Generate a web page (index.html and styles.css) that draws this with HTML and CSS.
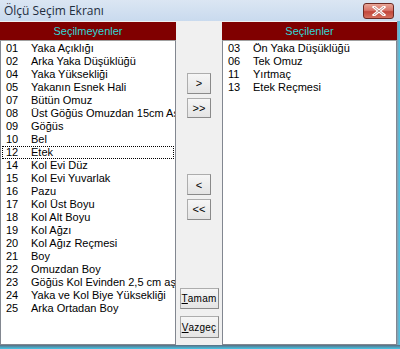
FILE: index.html
```html
<!DOCTYPE html>
<html>

<head>
    <link rel="stylesheet" href="styles.css">
</head>

<body>

    <div class="window">
        <div class="titlebar">
            <span class="title">Ölçü Seçim Ekranı</span>
            <span class="close-btn">
                <svg width="14" height="10" viewBox="0 0 14 10">
                    <path d="M2 1 L12 9 M12 1 L2 9" stroke="#fff" stroke-width="3" stroke-linecap="square"/>
                    <path d="M2 1 L12 9 M12 1 L2 9" stroke="#8a3a33" stroke-width="0.6" fill="none"/>
                </svg>
            </span>
        </div>

        <div class="client">
            <div class="panel left">
                <div class="panel-head">Seçilmeyenler</div>
                <div class="list">
                    <div class="item"><span class="no">01</span>Yaka Açıklığı</div>
                    <div class="item"><span class="no">02</span>Arka Yaka Düşüklüğü</div>
                    <div class="item"><span class="no">04</span>Yaka Yüksekliği</div>
                    <div class="item"><span class="no">05</span>Yakanın Esnek Hali</div>
                    <div class="item"><span class="no">07</span>Bütün Omuz</div>
                    <div class="item"><span class="no">08</span>Üst Göğüs Omuzdan 15cm Aşağı</div>
                    <div class="item"><span class="no">09</span>Göğüs</div>
                    <div class="item"><span class="no">10</span>Bel</div>
                    <div class="item focus"><span class="no">12</span>Etek</div>
                    <div class="item"><span class="no">14</span>Kol Evi Düz</div>
                    <div class="item"><span class="no">15</span>Kol Evi Yuvarlak</div>
                    <div class="item"><span class="no">16</span>Pazu</div>
                    <div class="item"><span class="no">17</span>Kol Üst Boyu</div>
                    <div class="item"><span class="no">18</span>Kol Alt Boyu</div>
                    <div class="item"><span class="no">19</span>Kol Ağzı</div>
                    <div class="item"><span class="no">20</span>Kol Ağız Reçmesi</div>
                    <div class="item"><span class="no">21</span>Boy</div>
                    <div class="item"><span class="no">22</span>Omuzdan Boy</div>
                    <div class="item"><span class="no">23</span>Göğüs Kol Evinden 2,5 cm aşağı</div>
                    <div class="item"><span class="no">24</span>Yaka ve Kol Biye Yüksekliği</div>
                    <div class="item"><span class="no">25</span>Arka Ortadan Boy</div>
                </div>
            </div>

            <div class="middle">
                <div class="btn small first">&gt;</div>
                <div class="btn small">&gt;&gt;</div>
                <div class="btn small third">&lt;</div>
                <div class="btn small">&lt;&lt;</div>
                <div class="btn wide tamam"><u>T</u>amam</div>
                <div class="btn wide"><u>V</u>azgeç</div>
            </div>

            <div class="panel right">
                <div class="panel-head">Seçilenler</div>
                <div class="list">
                    <div class="item"><span class="no">03</span>Ön Yaka Düşüklüğü</div>
                    <div class="item"><span class="no">06</span>Tek Omuz</div>
                    <div class="item"><span class="no">11</span>Yırtmaç</div>
                    <div class="item"><span class="no">13</span>Etek Reçmesi</div>
                </div>
            </div>

            <div class="frame-right"></div>
        </div>
        <div class="frame-bottom"></div>
    </div>

</body>

</html>
```

FILE: styles.css
```css
body {
    margin: 0;
    font-family: "Liberation Sans", Arial, sans-serif;
    background-color: #f0f0f0;
}

.window {
    width: 400px;
    height: 349px;
    display: flex;
    flex-direction: column;
    overflow: hidden;
}

.titlebar {
    height: 21px;
    background: linear-gradient(to bottom, #dbe6f3, #c9daee);
    display: flex;
    align-items: center;
    justify-content: space-between;
    padding-left: 4px;
    padding-right: 6px;
}

.title {
    font-family: "Open Sans", "DejaVu Sans", sans-serif;
    font-size: 12px;
    color: #1e2d3e;
}

.close-btn {
    width: 29px;
    height: 14px;
    margin-top: 1px;
    border: 1px solid #6d2a24;
    border-radius: 3px;
    background: linear-gradient(to bottom, #e8a597 0%, #d8756a 45%, #c2473b 55%, #d46f5e 100%);
    display: flex;
    align-items: center;
    justify-content: center;
}

.client {
    flex: 1;
    display: flex;
    min-height: 0;
}

.panel {
    display: flex;
    flex-direction: column;
    padding-top: 1px;
}

.panel.left {
    width: 176px;
}

.panel.right {
    width: 175px;
}

.panel-head {
    height: 18px;
    background-color: #800000;
    color: #2ed6d6;
    font-size: 11px;
    display: flex;
    align-items: center;
    justify-content: center;
}

.list {
    flex: 1;
    background-color: #fff;
    border: 1px solid #828790;
    border-top-color: #a0a0a0;
    padding-top: 1px;
    overflow: hidden;
}

.item {
    height: 11px;
    line-height: 11px;
    font-size: 11px;
    color: #000;
    white-space: nowrap;
    padding-left: 3px;
    border: 1px dotted transparent;
    margin: 0 1px;
}

.item.focus {
    border-color: #000;
}

.no {
    display: inline-block;
    width: 25px;
}

.middle {
    width: 46px;
    display: flex;
    flex-direction: column;
    align-items: center;
}

.btn {
    background: linear-gradient(to bottom, #f6f6f6, #e4e4e4);
    border: 1px solid #adadad;
    border-right-color: #8a8a8a;
    border-bottom-color: #8a8a8a;
    font-size: 11px;
    color: #000;
    display: flex;
    align-items: center;
    justify-content: center;
    box-sizing: border-box;
}

.btn.small {
    width: 24px;
    height: 22px;
    margin-bottom: 4px;
}

.btn.first {
    margin-top: 52px;
}

.btn.third {
    margin-top: 52px;
}

.btn.wide {
    width: 39px;
    height: 23px;
    margin-bottom: 7px;
    font-size: 10px;
    letter-spacing: 0.2px;
}

.btn.tamam {
    margin-top: 64px;
}

.frame-right {
    width: 3px;
    background: linear-gradient(to right, #8c9cae, #45c8ea);
}

.frame-bottom {
    height: 4px;
    background: linear-gradient(to bottom, #5a6c80, #45c8ea);
}
```
